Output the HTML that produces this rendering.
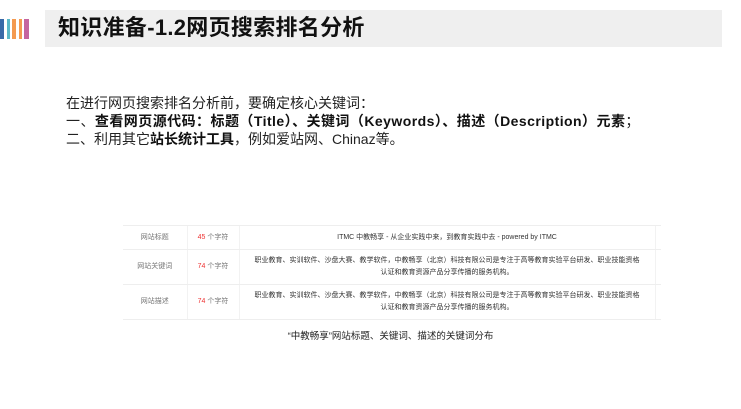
<!DOCTYPE html>
<html><head><meta charset="utf-8">
<style>
*{margin:0;padding:0;box-sizing:border-box}
body{width:741px;height:409px;background:#fff;position:relative;overflow:hidden;font-family:"Liberation Sans","Noto Sans CJK SC",sans-serif}
.s{position:absolute;top:19px;height:20px}
.bar{position:absolute;left:45px;top:10px;width:677px;height:37px;background:#efefef}
.title{position:absolute;left:58px;top:12px;font-size:22px;font-weight:bold;color:#111;line-height:32px;letter-spacing:0.3px}
.txt{position:absolute;left:66px;top:94px;font-size:14px;line-height:18px;color:#222;white-space:nowrap}
.txt b{color:#111}
table{position:absolute;left:123px;top:225px;width:538px;border-collapse:collapse;font-size:7px;color:#777;table-layout:fixed}
td{border-top:1px solid #eee;border-bottom:1px solid #eee;border-left:1px solid #f2f2f2;text-align:center;line-height:12px;white-space:nowrap;overflow:hidden}
td.c{color:#333}
.r{color:#e33}
.cap{position:absolute;left:0;width:781px;top:328px;text-align:center;font-size:9.5px;color:#222}
</style></head><body>
<div class="s" style="left:0;width:4px;background:#3a6aa8"></div>
<div class="s" style="left:7px;width:3px;background:#5bb8c8"></div>
<div class="s" style="left:12px;width:4px;background:#f49a50"></div>
<div class="s" style="left:19px;width:3px;background:#f49a50"></div>
<div class="s" style="left:24px;width:5px;background:#c565a0"></div>
<div class="bar"></div>
<div class="title">知识准备-1.2网页搜索排名分析</div>
<div class="txt">在进行网页搜索排名分析前，要确定核心关键词：<br><span style="letter-spacing:0.45px">一、<b>查看网页源代码：标题（Title）、关键词（Keywords）、描述（Description）元素</b>；</span><br>二、利用其它<b>站长统计工具</b>，例如爱站网、Chinaz等。</div>
<table>
<colgroup><col style="width:64px"><col style="width:52px"><col style="width:416px"><col style="width:6px"></colgroup>
<tr style="height:24px"><td style="border-left:none">网站标题</td><td><span class="r">45</span> 个字符</td><td class="c">ITMC 中教畅享 - 从企业实践中来，到教育实践中去 - powered by ITMC</td><td></td></tr>
<tr style="height:35px"><td style="border-left:none">网站关键词</td><td><span class="r">74</span> 个字符</td><td class="c">职业教育、实训软件、沙盘大赛、教学软件，中教畅享（北京）科技有限公司是专注于高等教育实验平台研发、职业技能资格<br>认证和教育资源产品分享传播的服务机构。</td><td></td></tr>
<tr style="height:35px"><td style="border-left:none">网站描述</td><td><span class="r">74</span> 个字符</td><td class="c">职业教育、实训软件、沙盘大赛、教学软件，中教畅享（北京）科技有限公司是专注于高等教育实验平台研发、职业技能资格<br>认证和教育资源产品分享传播的服务机构。</td><td></td></tr>
</table>
<div class="cap">“中教畅享”网站标题、关键词、描述的关键词分布</div>
</body></html>
